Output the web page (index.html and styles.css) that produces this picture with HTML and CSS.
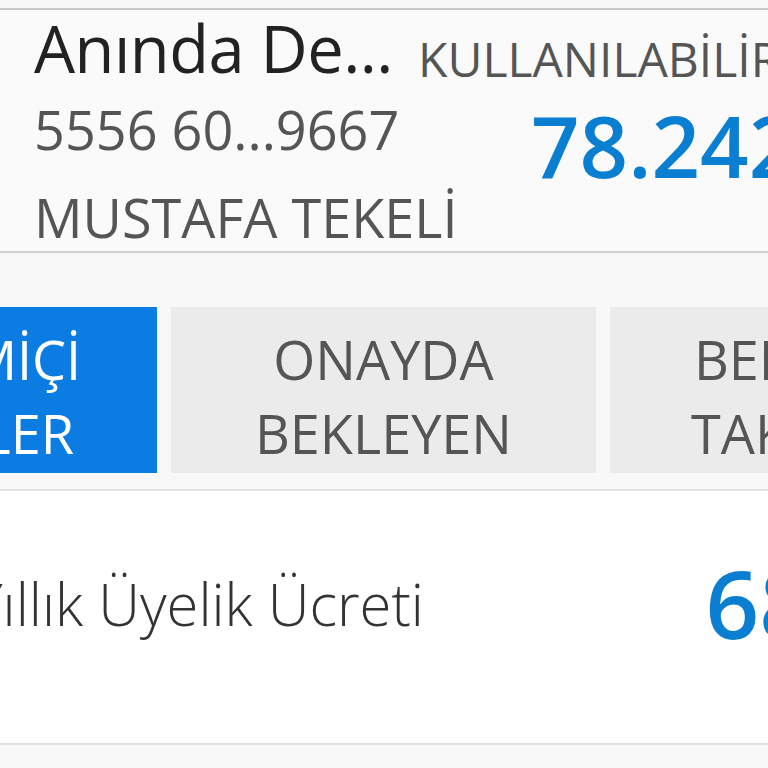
FILE: index.html
```html
<html>
  <head>
    <link rel="stylesheet" href="styles.css">
  </head>
  <body>
    <div id="account">
      <div class="account-info">
        <div class="account-name">Anında De...</div>
        <div class="account-no">5556 60...9667</div>
        <div class="account-owner">MUSTAFA TEKELİ</div>
      </div>
      <div class="account-balance">
        <div class="balance-label">KULLANILABİLİR</div>
        <div class="balance-value">78.242</div>
      </div>
    </div>

    <div id="tabs">
      <div class="tab active">ÇEVRİMİÇİ<br>İŞLEMLER</div>
      <div class="tab">ONAYDA<br>BEKLEYEN</div>
      <div class="tab">BEKLEYEN<br>TAKSİTLER</div>
    </div>

    <div id="list">
      <div class="list-row">
        <span class="row-label">Yıllık Üyelik Ücreti</span>
        <span class="row-amount">68</span>
      </div>
    </div>
  </body>
</html>
```

FILE: styles.css
```css
body {
  font-family: "Open Sans", sans-serif;
  margin: 0;
  background-color: #f8f8f8;
  overflow: hidden;
  width: 768px;
}
#account {
  display: flex;
  margin-top: 8px;
  height: 241px;
  background-color: #fafafa;
  border-top: 2px solid #c9c9c9;
  border-bottom: 2px solid #cfcfcf;
  white-space: nowrap;
  overflow: hidden;
}
.account-info {
  padding-left: 34px;
  width: 384px;
  flex: none;
}
.account-name {
  font-size: 65px;
  line-height: 74px;
  margin-top: 1px;
  letter-spacing: -0.5px;
  color: #222;
}
.account-no,
.account-owner {
  font-size: 54px;
  line-height: 88px;
  color: #555;
}
.account-balance {
  flex: none;
}
.balance-label {
  font-size: 48px;
  line-height: 50px;
  margin-top: 24px;
  color: #555;
}
.balance-value {
  font-size: 85px;
  line-height: 100px;
  margin: 11px 0 0 113px;
  color: #0a7fd2;
  font-weight: 600;
}
#tabs {
  display: flex;
  gap: 14px;
  margin: 54px 0 0 -268px;
  padding-bottom: 16px;
  border-bottom: 2px solid #e3e3e3;
}
.tab {
  flex: none;
  box-sizing: border-box;
  width: 425px;
  height: 166px;
  padding-top: 12px;
  display: flex;
  align-items: center;
  justify-content: center;
  text-align: center;
  background-color: #ebebeb;
  color: #555;
  font-size: 54px;
  line-height: 74px;
}
.tab.active {
  padding-left: 16px;
  background-color: #0b7de2;
  color: #fff;
}
#list {
  background-color: #fff;
  border-bottom: 2px solid #e0e0e0;
}
.list-row {
  display: flex;
  box-sizing: border-box;
  justify-content: space-between;
  align-items: center;
  height: 252px;
  padding-bottom: 28px;
  margin-left: -28px;
  white-space: nowrap;
}
.row-label {
  font-size: 58px;
  font-weight: 300;
  color: #333;
}
.row-amount {
  font-size: 94px;
  font-weight: 600;
  color: #0a7fd2;
  margin-right: -45px;
}
```
